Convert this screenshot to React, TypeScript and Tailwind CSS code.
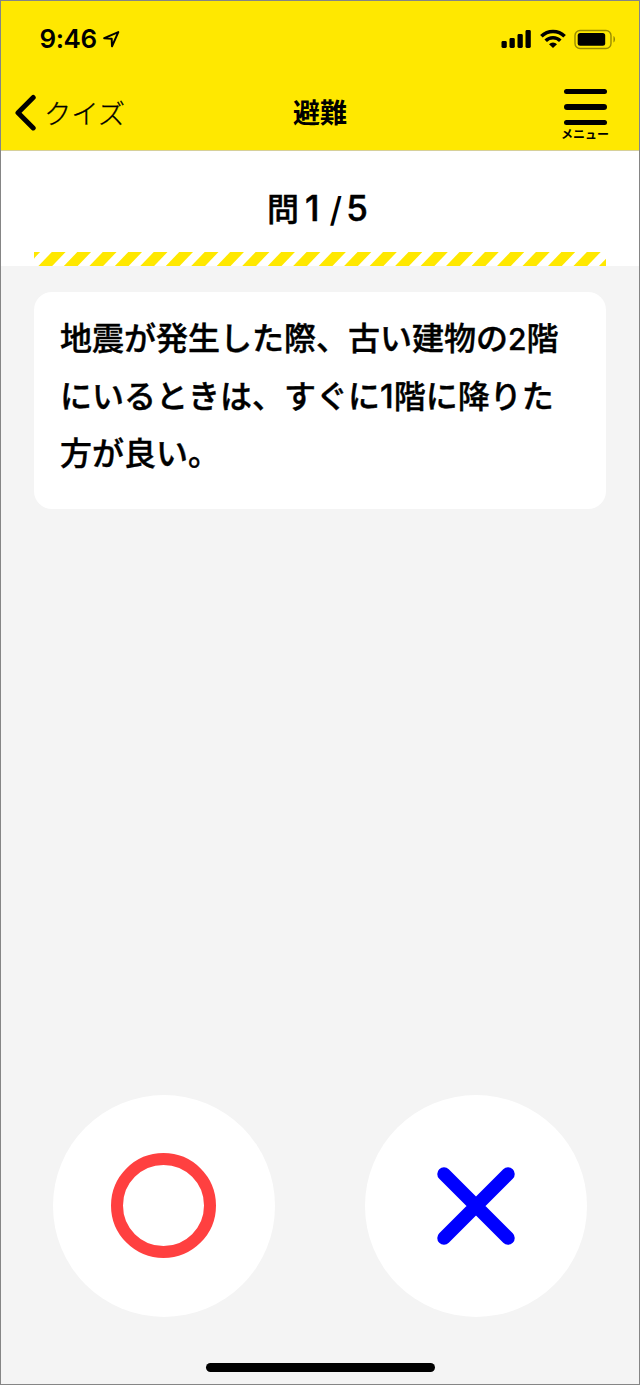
import { useState } from "react";

function StatusBar() {
  return (
    <div className="flex h-[76px] items-start justify-between pl-[38.5px] pr-[23px]">
      <div className="flex pt-[22px]">
        <span className="font-['Inter','Liberation_Sans',sans-serif] text-[26px] leading-8 font-semibold tracking-[-0.4px]">9:46</span>
        <svg aria-hidden="true" className="mt-[7px] ml-[5px]" width="20" height="19" viewBox="0 0 20 19" fill="none">
          <path d="M2.2 8.2 16.3 2.1 10 16.3 9.7 8.7Z" stroke="black" strokeWidth="2" strokeLinejoin="round" />
        </svg>
      </div>

      <div className="flex items-start pt-[27px]">
        <svg aria-hidden="true" width="30" height="20" viewBox="0 0 30 20">
          <rect x="0.5" y="13" width="5.3" height="7" rx="1.4" />
          <rect x="8.5" y="10" width="5.3" height="10" rx="1.4" />
          <rect x="16.5" y="6" width="5.3" height="14" rx="1.4" />
          <rect x="24.5" y="2" width="5.3" height="18" rx="1.4" />
        </svg>
        <svg aria-hidden="true" className="ml-[9px]" width="26" height="20" viewBox="0 0 26 20" fill="none" stroke="black" strokeWidth="3.6">
          <path d="M1.4 8.2A16.5 16.5 0 0 1 24.6 8.2" />
          <path d="M5.7 12.7A10.4 10.4 0 0 1 20.3 12.7" />
          <path d="M9 16.2A5.8 5.8 0 0 1 17 16.2L13 20Z" fill="black" stroke="none" />
        </svg>
        <svg aria-hidden="true" className="ml-[8px]" width="42" height="22" viewBox="0 0 42 22">
          <rect x="1" y="2.5" width="36" height="18" rx="5" fill="none" stroke="black" strokeOpacity="0.4" strokeWidth="1.4" />
          <rect x="3.7" y="5" width="27.5" height="12.7" rx="2.5" />
          <path d="M39.5 8C41.4 9 41.4 13.5 39.5 14.5Z" fillOpacity="0.45" />
        </svg>
      </div>
    </div>
  );
}

function Header() {
  return (
    <header className="h-[150px] border-b border-[#d6d09a] bg-[#ffe800]">
      <StatusBar />
      <div className="grid grid-cols-3">
        <button className="flex items-start pl-[13px]" aria-label="クイズ">
          <svg aria-hidden="true" className="mt-[17px]" width="22" height="37" viewBox="0 0 22 37" fill="none">
            <path d="M19.2 3.5 4 18.7 19.2 33.9" stroke="black" strokeWidth="5" strokeLinecap="round" strokeLinejoin="round" />
          </svg>
          <span className="mt-[15px] ml-[8px] text-[27.3px] leading-10 font-light [-webkit-text-stroke:0.3px_black]">クイズ</span>
        </button>
        <h1 className="mt-[15px] text-center text-[27px] leading-10 font-bold">避難</h1>
        <button className="mt-[12px] mr-[28px] flex w-[52px] flex-col items-center justify-self-end" aria-label="メニュー">
          <span className="flex flex-col gap-[10px]">
            <span className="h-[5.4px] w-[43px] rounded-full bg-black" />
            <span className="h-[5.4px] w-[43px] rounded-full bg-black" />
            <span className="h-[5.4px] w-[43px] rounded-full bg-black" />
          </span>
          <span className="mt-px text-[12px] leading-4 font-bold whitespace-nowrap">メニュー</span>
        </button>
      </div>
    </header>
  );
}

function StripedRule() {
  return (
    <svg aria-hidden="true" className="block h-[14px] w-[572px]" viewBox="0 0 572 14" fill="#ffe800">
      {[...Array(24)].map((_, i) => {
        const x = 4.4 + (i - 1) * 25.48;
        return <path key={i} d={`M${x} 14h13.8L${x + 27.2} 0h-13.8Z`} />;
      })}
    </svg>
  );
}

export default function App() {
  const [answer, setAnswer] = useState<boolean | null>(null);

  return (
    <div className="flex h-[1385px] w-[640px] flex-col border border-[#858585] bg-[#f4f4f4] font-['Noto_Sans_CJK_JP',sans-serif] text-black">
      <Header />

      <section className="flex h-[115px] flex-col justify-between bg-white px-[33px]">
        <p className="mt-[31px] flex items-center pl-[233px] text-[32px] leading-[48px] font-medium [-webkit-text-stroke:0.5px_black]">
          <span className="-mt-[3px]">問</span>
          <span className="ml-[6px] font-['Inter',sans-serif] text-[35px]">1</span>
          <span className="mt-[4px] ml-[10px] font-['Inter',sans-serif] text-[34px] [-webkit-text-stroke:0px]">/</span>
          <span className="ml-[4px] font-['Inter',sans-serif] text-[35px]">5</span>
        </p>
        <StripedRule />
      </section>

      <main className="flex flex-1 flex-col px-[33px] pt-[26px]">
        <div className="h-[217px] rounded-[18px] bg-white px-[26px] pt-[16px] text-[32px] leading-[57.7px] font-medium [-webkit-text-stroke:0.4px_black]">
          <p>
            地震が発生した際、古い建物の<span className="font-['Inter',sans-serif] text-[30px] leading-none">2</span>階
            <br />
            にいるときは、すぐに<span className="font-['Inter',sans-serif] text-[33px] leading-none">1</span>階に降りた
            <br />
            方が良い。
          </p>
        </div>

        <div className="mt-auto flex justify-between px-[19px]">
          <button
            onClick={() => setAnswer(true)}
            aria-label="まる"
            aria-pressed={answer === true}
            className="flex size-[222px] items-center justify-center rounded-full bg-white"
          >
            <span className="mr-px mb-[2px] size-[105px] rounded-full border-[12px] border-[#ff4040]" />
          </button>
          <button
            onClick={() => setAnswer(false)}
            aria-label="ばつ"
            aria-pressed={answer === false}
            className="flex size-[222px] items-center justify-center rounded-full bg-white"
          >
            <svg aria-hidden="true" width="78" height="78" viewBox="0 0 78 78">
              <path d="M7 7 71 71M71 7 7 71" stroke="#0000ff" strokeWidth="13.5" strokeLinecap="round" />
            </svg>
          </button>
        </div>

        <div className="mt-[46px] mb-[12px] h-[9px] w-[229px] self-center rounded-full bg-black" />
      </main>
    </div>
  );
}
